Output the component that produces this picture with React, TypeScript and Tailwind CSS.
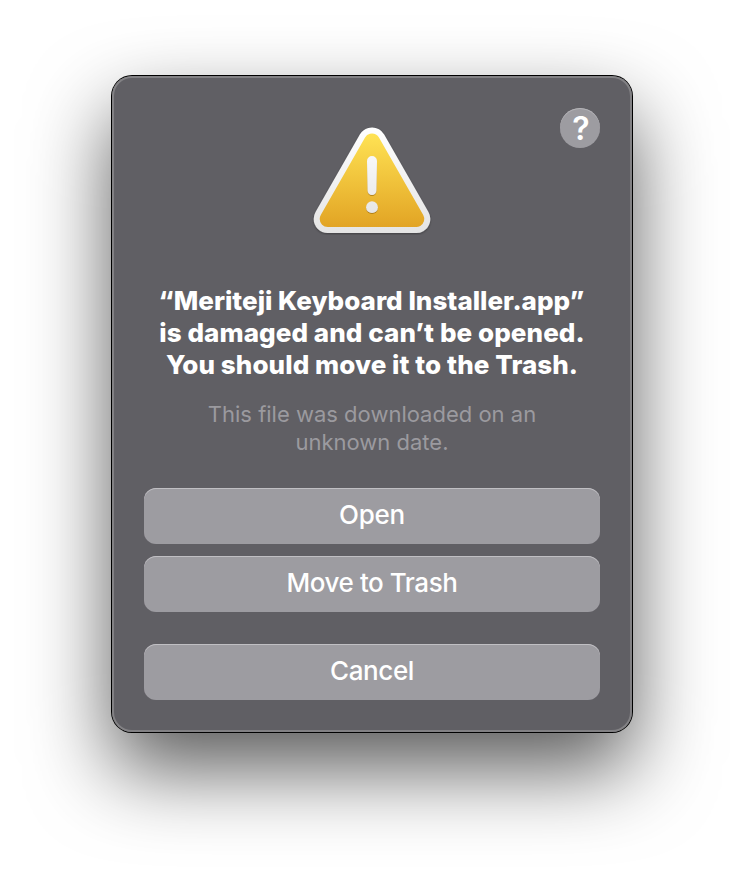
import type { ReactNode } from "react";

function WarningIcon() {
  return (
    <svg
      className="mt-4 h-[116px] w-[120px] overflow-visible"
      viewBox="312 124 120 116"
      role="img"
      aria-label="Warning"
    >
      <defs>
        <linearGradient id="rim" gradientUnits="userSpaceOnUse" x1="0" y1="127" x2="0" y2="233">
          <stop offset="0" stopColor="#ffffff" />
          <stop offset="1" stopColor="#e4e4e4" />
        </linearGradient>
        <linearGradient id="fill" gradientUnits="userSpaceOnUse" x1="0" y1="133" x2="0" y2="227">
          <stop offset="0" stopColor="#ffe354" />
          <stop offset="1" stopColor="#e2a424" />
        </linearGradient>
        <linearGradient id="mark" gradientUnits="userSpaceOnUse" x1="0" y1="156" x2="0" y2="214">
          <stop offset="0" stopColor="#f8f8f8" />
          <stop offset="1" stopColor="#e6e6e6" />
        </linearGradient>
        <filter id="drop" x="-20%" y="-20%" width="140%" height="140%">
          <feDropShadow dx="0" dy="1" stdDeviation="1.3" floodColor="#000" floodOpacity="0.35" />
        </filter>
        <filter id="markDrop" x="-50%" y="-20%" width="200%" height="140%">
          <feDropShadow dx="0" dy="1" stdDeviation="0.7" floodColor="#7a5000" floodOpacity="0.5" />
        </filter>
      </defs>
      <path
        d="M372 141.5 L416.3 219 H327.7 Z"
        fill="url(#rim)"
        stroke="url(#rim)"
        strokeWidth="28"
        strokeLinejoin="round"
        filter="url(#drop)"
      />
      <path
        d="M372 141.5 L416.3 219 H327.7 Z"
        fill="url(#fill)"
        stroke="url(#fill)"
        strokeWidth="16"
        strokeLinejoin="round"
      />
      <g fill="url(#mark)" filter="url(#markDrop)">
        <path d="M367 161 a5 5 0 0 1 10 0 L376.4 190.6 a4.4 4.4 0 0 1 -8.8 0 Z" />
        <circle cx="372" cy="207.2" r="5.9" />
      </g>
    </svg>
  );
}

function DialogButton({ children, className = "" }: { children: ReactNode; className?: string }) {
  return (
    <button
      className={`flex h-14 w-full items-center justify-center rounded-[12px] bg-[#9d9ca1] pb-[3px] text-[26px] font-medium text-white shadow-[inset_0_1px_0_#c0bfc3] ${className}`}
    >
      {children}
    </button>
  );
}

export default function App() {
  return (
    <main className="flex h-[880px] w-[744px] items-start justify-center bg-white pt-[76px] font-['Inter',sans-serif]">
      <section className="flex h-[656px] w-[520px] flex-col rounded-[20px] bg-[#605f64] px-8 pt-8 shadow-[inset_0_0_0_2px_#828184,0_0_0_1px_#000,0_37px_82px_rgba(0,0,0,0.65)]">
        <header className="grid h-[177px] shrink-0 grid-cols-[40px_1fr_40px] items-start justify-items-center">
          <span />
          <WarningIcon />
          <button
            aria-label="Help"
            className="flex size-10 items-center justify-center rounded-full bg-[#9d9ca1] pt-px pl-0.5 text-[32px] leading-none font-semibold text-white shadow-[inset_0_1px_0_#b4b3b7]"
          >
            ?
          </button>
        </header>
        <h1 className="flex flex-col items-center text-[26px] leading-8 font-extrabold whitespace-nowrap text-white">
          <span className="mr-px tracking-[0.02px]">“Meriteji Keyboard Installer.app”</span>
          <span className="tracking-[0.08px]">is damaged and can’t be opened.</span>
          <span className="tracking-[0.08px]">You should move it to the Trash.</span>
        </h1>
        <p className="mt-[19px] flex flex-col items-center text-[22px] leading-7 whitespace-nowrap text-[#9b9a9f]">
          <span>This file was downloaded on an</span>
          <span>unknown date.</span>
        </p>
        <div className="mt-8 flex flex-col">
          <DialogButton className="tracking-[-0.2px]">Open</DialogButton>
          <DialogButton className="mt-3 tracking-[-0.45px]">Move to Trash</DialogButton>
          <DialogButton className="mt-8 tracking-[-0.4px]">Cancel</DialogButton>
        </div>
      </section>
    </main>
  );
}
